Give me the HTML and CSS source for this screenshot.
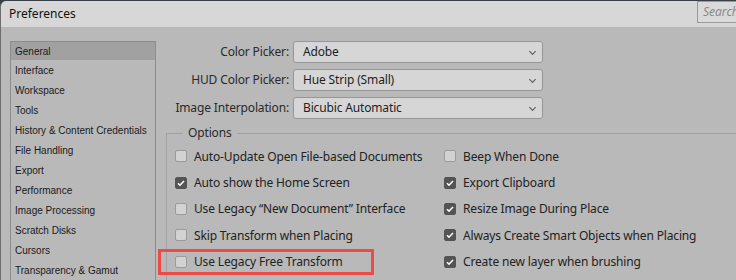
FILE: index.html
```html
<!DOCTYPE html>
<html lang="en">
<head>
  <meta charset="UTF-8">
  <title>Preferences</title>
  <link rel="stylesheet" href="styles.css">
</head>
<body>

  <div class="window">
    <!-- Title bar -->
    <div class="titlebar">
      <span class="title">Preferences</span>
      <div class="search">Search</div>
    </div>

    <div class="content">
      <!-- Left: category list -->
      <ul class="categories">
        <li class="selected">General</li>
        <li>Interface</li>
        <li>Workspace</li>
        <li>Tools</li>
        <li>History &amp; Content Credentials</li>
        <li>File Handling</li>
        <li>Export</li>
        <li>Performance</li>
        <li>Image Processing</li>
        <li>Scratch Disks</li>
        <li>Cursors</li>
        <li>Transparency &amp; Gamut</li>
      </ul>

      <!-- Right: settings -->
      <div class="panel">
        <div class="fields">
          <label>Color Picker:</label>
          <div class="select">Adobe<span class="chev"></span></div>
          <label>HUD Color Picker:</label>
          <div class="select">Hue Strip (Small)<span class="chev"></span></div>
          <label>Image Interpolation:</label>
          <div class="select">Bicubic Automatic<span class="chev"></span></div>
        </div>

        <div class="options">
          <div class="legend">Options</div>
          <div class="checks">
            <div class="check"><span class="box"></span>Auto-Update Open File-based Documents</div>
            <div class="check"><span class="box"></span>Beep When Done</div>
            <div class="check"><span class="box on"></span>Auto show the Home Screen</div>
            <div class="check"><span class="box on"></span>Export Clipboard</div>
            <div class="check"><span class="box"></span>Use Legacy &ldquo;New Document&rdquo; Interface</div>
            <div class="check"><span class="box on"></span>Resize Image During Place</div>
            <div class="check"><span class="box"></span>Skip Transform when Placing</div>
            <div class="check"><span class="box on"></span>Always Create Smart Objects when Placing</div>
            <div class="check marked"><span class="box"></span>Use Legacy Free Transform</div>
            <div class="check"><span class="box on"></span>Create new layer when brushing</div>
          </div>
        </div>
      </div>
    </div>
  </div>

</body>
</html>
```

FILE: styles.css
```css
body {
  margin: 0;
  background: #3a3f47;
  font-family: "Noto Sans", "Open Sans", sans-serif;
  color: #1e1e1e;
}

.window {
  width: 736px;
  height: 279px;
  margin-top: 1px;
  background: #b9b9b9;
  border-left: 1px solid #6e6e6e;
  border-top-left-radius: 6px;
  overflow: hidden;
  box-sizing: border-box;
}

.titlebar {
  height: 26px;
  background: #d7d7d7;
  display: flex;
  justify-content: space-between;
  align-items: flex-start;
}

.title {
  font-size: 12px;
  padding-left: 8px;
  line-height: 25px;
  color: #111;
}

.search {
  width: 60px;
  height: 20px;
  margin-right: -28px;
  border: 1px solid #9a9a9a;
  background: #dadada;
  font-size: 12px;
  font-style: italic;
  color: #8a8a8a;
  line-height: 20px;
  padding-left: 5px;
}

.content {
  display: flex;
  padding-top: 14px;
}

.categories {
  list-style: none;
  margin: 0 0 0 9px;
  padding: 0;
  width: 146px;
  height: 260px;
  border: 1px solid #8c8c8c;
  box-sizing: border-box;
  font-family: "Liberation Sans", Arial, sans-serif;
  font-size: 10px;
  color: #1a1a1a;
}

.categories li {
  height: 20px;
  line-height: 22px;
  padding-left: 4px;
  white-space: nowrap;
}

.categories li.selected {
  background: #a1a1a1;
  height: 18px;
  line-height: 20px;
}

.panel {
  margin-left: 10px;
  flex: 1;
}

.fields {
  display: grid;
  grid-template-columns: 123px 250px;
  column-gap: 4px;
  row-gap: 6px;
  font-size: 12px;
  letter-spacing: -0.15px;
}

.fields label {
  text-align: right;
  line-height: 22px;
  color: #2a2a2a;
}

.select {
  height: 22px;
  box-sizing: border-box;
  border: 1px solid #969696;
  border-radius: 3px;
  background: #d6d6d6;
  padding-left: 9px;
  line-height: 20px;
  position: relative;
}

.chev {
  position: absolute;
  right: 7px;
  top: 7px;
  width: 4px;
  height: 4px;
  border-right: 1px solid #555;
  border-bottom: 1px solid #555;
  transform: rotate(45deg);
}

.options {
  margin-top: 14px;
  border: 1px solid #a2a2a2;
  border-right: none;
  height: 146px;
  position: relative;
  font-size: 12px;
  letter-spacing: -0.15px;
}

.legend {
  position: absolute;
  top: -10px;
  left: 16px;
  padding: 0 5px;
  background: #b9b9b9;
  line-height: 18px;
  color: #2a2a2a;
}

.checks {
  display: grid;
  grid-template-columns: 269px auto;
  grid-auto-rows: 26.4px;
  padding: 9px 0 0 8px;
}

.check {
  display: flex;
  align-items: center;
  gap: 7px;
  white-space: nowrap;
  color: #222;
}

.box {
  width: 12px;
  height: 12px;
  border: 1px solid #9a9a9a;
  border-radius: 2px;
  background: #d2d2d2;
  flex: none;
  box-sizing: border-box;
}

.box.on {
  background: #545454 url("data:image/svg+xml,%3Csvg xmlns='http://www.w3.org/2000/svg' viewBox='0 0 12 12'%3E%3Cpath d='M3 6.2l2 2 4-4.2' fill='none' stroke='white' stroke-width='1.6'/%3E%3C/svg%3E") center/12px no-repeat;
  border-color: #545454;
}

.check.marked {
  position: relative;
}

.check.marked::after {
  content: "";
  position: absolute;
  left: -17px;
  top: 0;
  width: 216px;
  height: 26px;
  border: 3px solid #ef4a48;
  box-sizing: border-box;
}
```
